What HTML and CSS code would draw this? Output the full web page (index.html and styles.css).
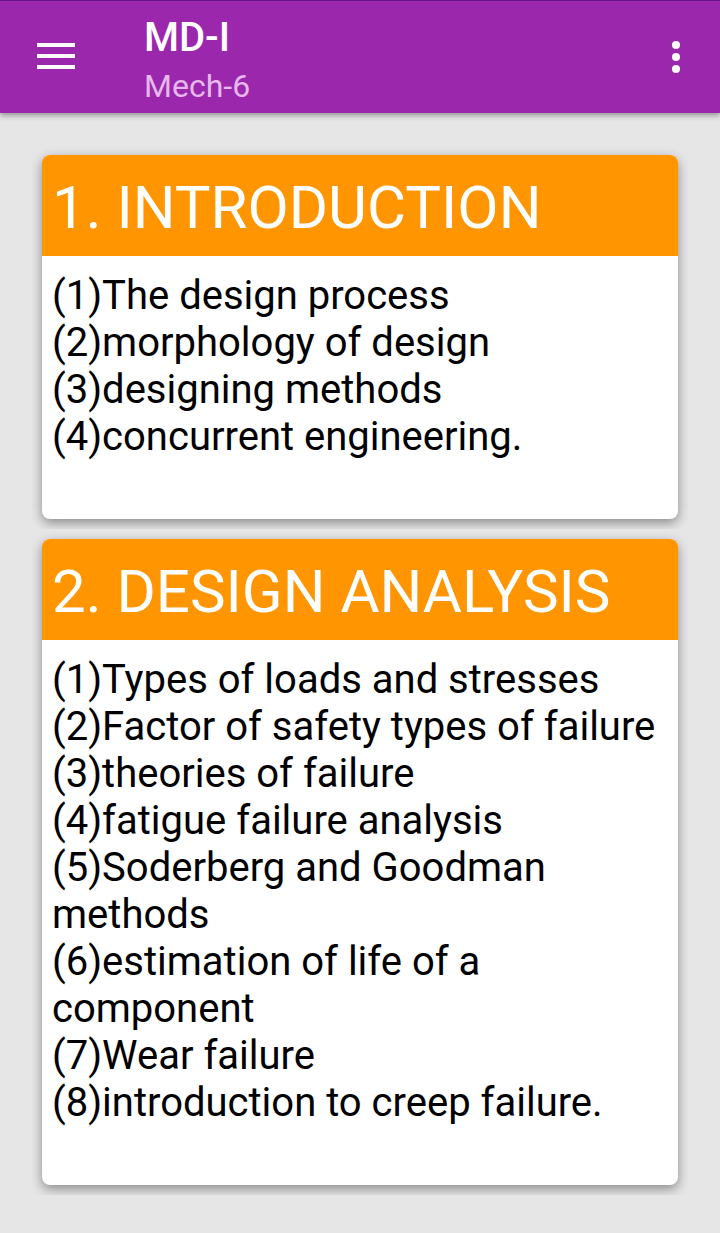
FILE: index.html
```html
<!DOCTYPE html>
<html lang="en">
<head>
<meta charset="utf-8">
<meta name="viewport" content="width=device-width, initial-scale=1">
<title>MD-I</title>
<link rel="stylesheet" href="styles.css">
</head>
<body>
<header class="toolbar">
  <button class="icon-button" type="button" aria-label="Open menu">
    <svg width="38" height="28" viewBox="0 0 38 28"><path d="M0 2h38M0 13h38M0 24h38" stroke="currentColor" stroke-width="4"/></svg>
  </button>
  <div class="titles">
    <h1 class="title">MD-I</h1>
    <p class="subtitle">Mech-6</p>
  </div>
  <button class="icon-button" type="button" aria-label="More options">
    <svg width="8" height="32" viewBox="0 0 8 32" fill="currentColor"><circle cx="4" cy="4" r="4"/><circle cx="4" cy="16" r="4"/><circle cx="4" cy="28" r="4"/></svg>
  </button>
</header>
<main class="chapters">
  <section class="card">
    <h2 class="card-title">1. INTRODUCTION</h2>
    <ul class="topics">
      <li>(1)The design process</li>
      <li>(2)morphology of design</li>
      <li>(3)designing methods</li>
      <li>(4)concurrent engineering.</li>
    </ul>
  </section>
  <section class="card">
    <h2 class="card-title">2. DESIGN ANALYSIS</h2>
    <ul class="topics">
      <li>(1)Types of loads and stresses</li>
      <li>(2)Factor of safety types of failure</li>
      <li>(3)theories of failure</li>
      <li>(4)fatigue failure analysis</li>
      <li>(5)Soderberg and Goodman methods</li>
      <li>(6)estimation of life of a component</li>
      <li>(7)Wear failure</li>
      <li>(8)introduction to creep failure.</li>
    </ul>
  </section>
</main>
</body>
</html>
```
FILE: styles.css
```css
* { box-sizing: border-box; }
body {
  margin: 0;
  background: #e6e6e6;
  color: #000;
  font-family: Roboto, "Liberation Sans", sans-serif;
}
.toolbar {
  display: flex;
  align-items: center;
  height: 113px;
  padding: 0 24px 0 16px;
  background: #9b27ac;
  color: #fff;
  border-top: 1px solid #6a1389;
  box-shadow: 0 2px 6px rgba(0, 0, 0, 0.4);
}
.icon-button {
  display: flex;
  align-items: center;
  justify-content: center;
  width: 80px;
  height: 80px;
  padding: 0;
  border: 0;
  background: none;
  color: inherit;
}
.icon-button:last-child { width: 40px; }
.titles { flex: 1; padding: 10px 0 0 48px; }
.title { margin: 0; font-size: 40px; line-height: 48px; font-weight: 500; }
.subtitle { margin: 0; font-size: 32px; line-height: 48px; color: #e6b8ee; }
.chapters {
  display: flex;
  flex-direction: column;
  gap: 20px;
  padding: 42px;
}
.card {
  overflow: hidden;
  border-radius: 8px;
  background: #fff;
  box-shadow: 0 4px 12px rgba(0, 0, 0, 0.4);
  clip-path: inset(-10px);
}
.card-title {
  margin: 0;
  padding: 17px 10px 12px;
  background: #ff9500;
  color: #fff;
  font-size: 60px;
  line-height: 72px;
  font-weight: 400;
}
.topics {
  margin: 0;
  padding: 16px 10px 59px;
  list-style: none;
  font-size: 40px;
  line-height: 47px;
}
```
